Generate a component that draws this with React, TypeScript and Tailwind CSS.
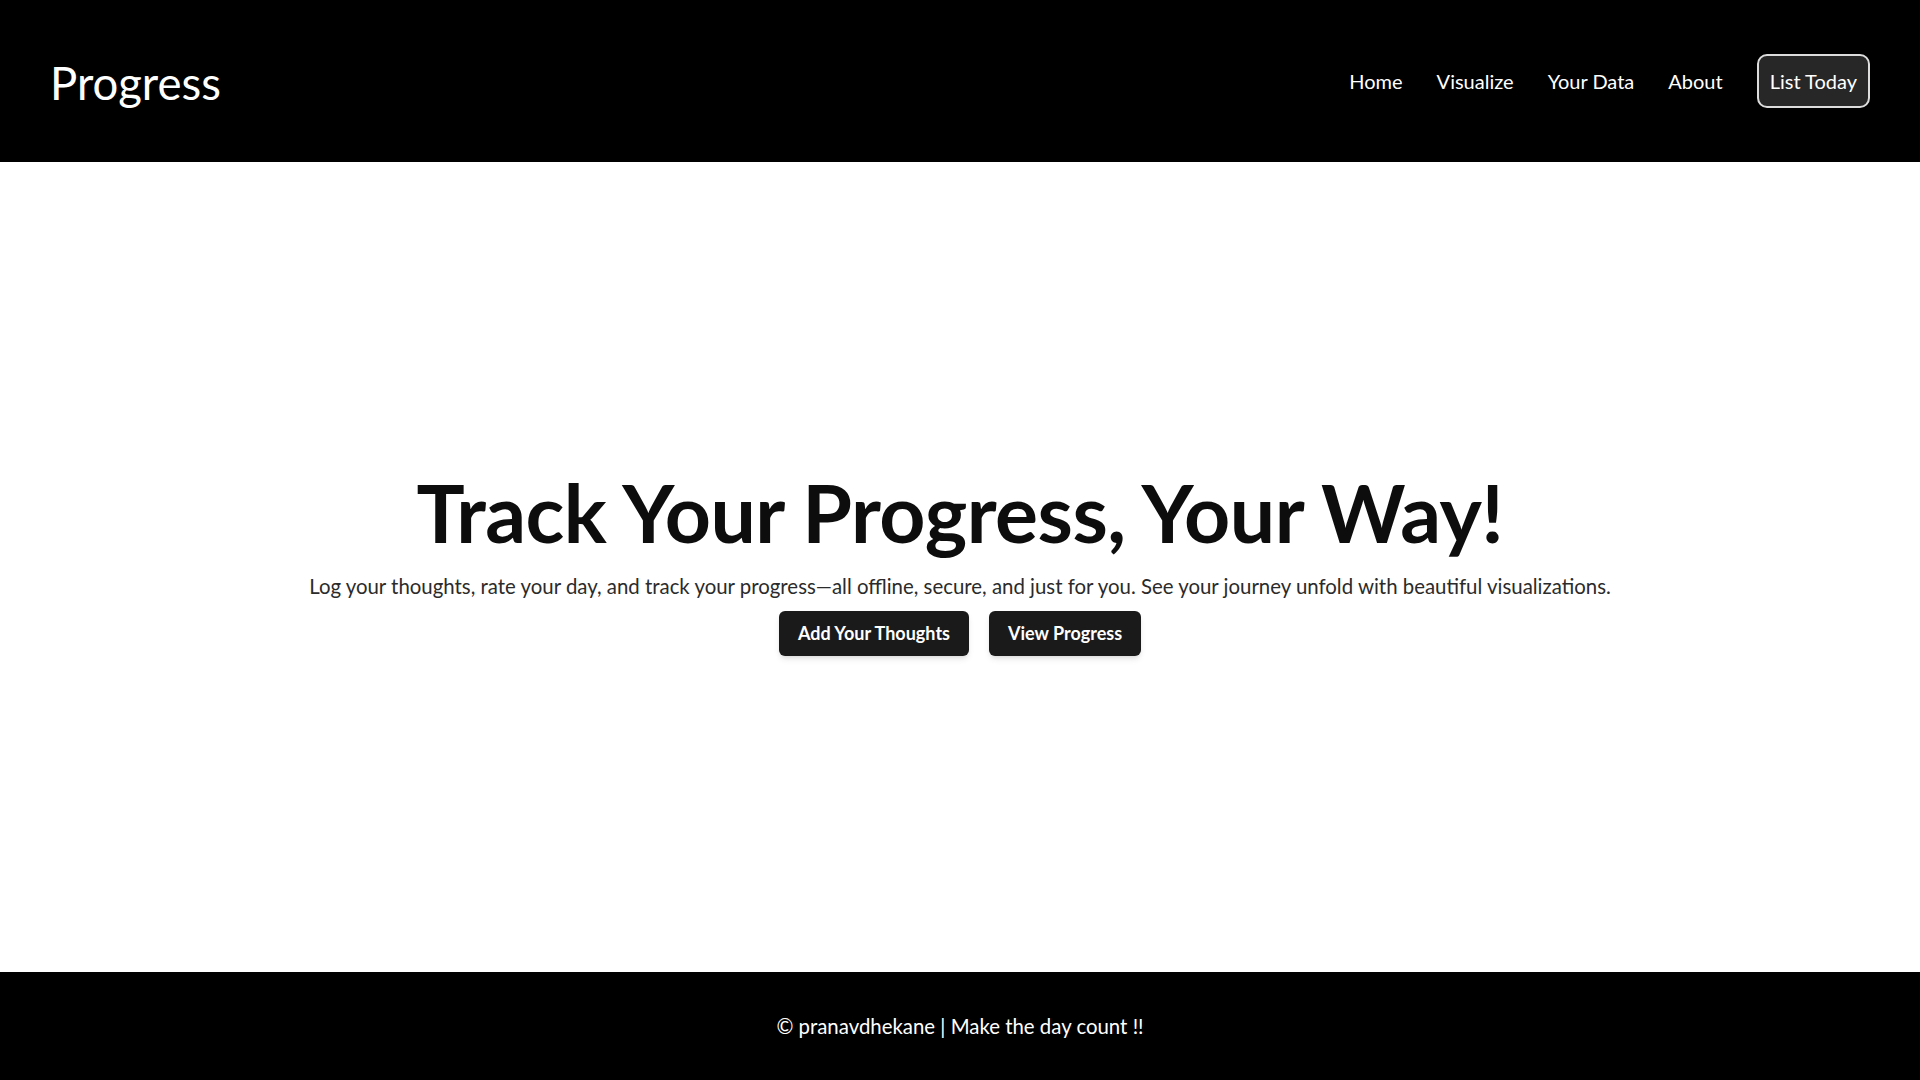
const navLinks = ["Home", "Visualize", "Your Data", "About"];

function Header() {
  return (
    <header className="h-[162px] bg-black flex items-center justify-between pl-[50px] pr-[50px]">
      <a href="#" className="text-[45.5px] text-white leading-none pt-[4px]">
        Progress
      </a>
      <nav className="flex items-center gap-[34px] text-[20px] text-white">
        {navLinks.map((link) => (
          <a key={link} href="#" className="leading-none">
            {link}
          </a>
        ))}
        <button className="h-[54px] px-[11px] rounded-[10px] border-2 border-[#dcdcdc] bg-[#272727] text-white text-[20px] leading-none">
          List Today
        </button>
      </nav>
    </header>
  );
}

function Hero() {
  return (
    <main className="flex-1 flex flex-col items-center justify-center text-center pb-[14px]">
      {/* Título principal */}
      <h1 className="text-[80.5px] font-bold text-[#0d0d0d] leading-[1.2] tracking-[-0.5px]">
        Track Your Progress, Your Way!
      </h1>
      <p className="text-[20.4px] text-[#2b2b2b] leading-[30px] mt-[11px]">
        Log your thoughts, rate your day, and track your progress—all offline, secure, and just for you. See your
        journey unfold with beautiful visualizations.
      </p>

      {/* Botões */}
      <div className="flex gap-[20px] mt-[10px]">
        <button className="h-[45px] px-[19px] rounded-[6px] bg-[#1a1a1a] text-white text-[18px] font-bold shadow-md">
          Add Your Thoughts
        </button>
        <button className="h-[45px] px-[19px] rounded-[6px] bg-[#1a1a1a] text-white text-[18px] font-bold shadow-md">
          View Progress
        </button>
      </div>
    </main>
  );
}

function Footer() {
  return (
    <footer className="h-[108px] bg-black flex items-center justify-center text-white text-[20.4px]">
      © pranavdhekane | Make the day count !!
    </footer>
  );
}

export default function App() {
  return (
    <div className="min-h-screen flex flex-col bg-white font-['Segoe_UI',Lato,sans-serif]">
      <Header />
      <Hero />
      <Footer />
    </div>
  );
}
